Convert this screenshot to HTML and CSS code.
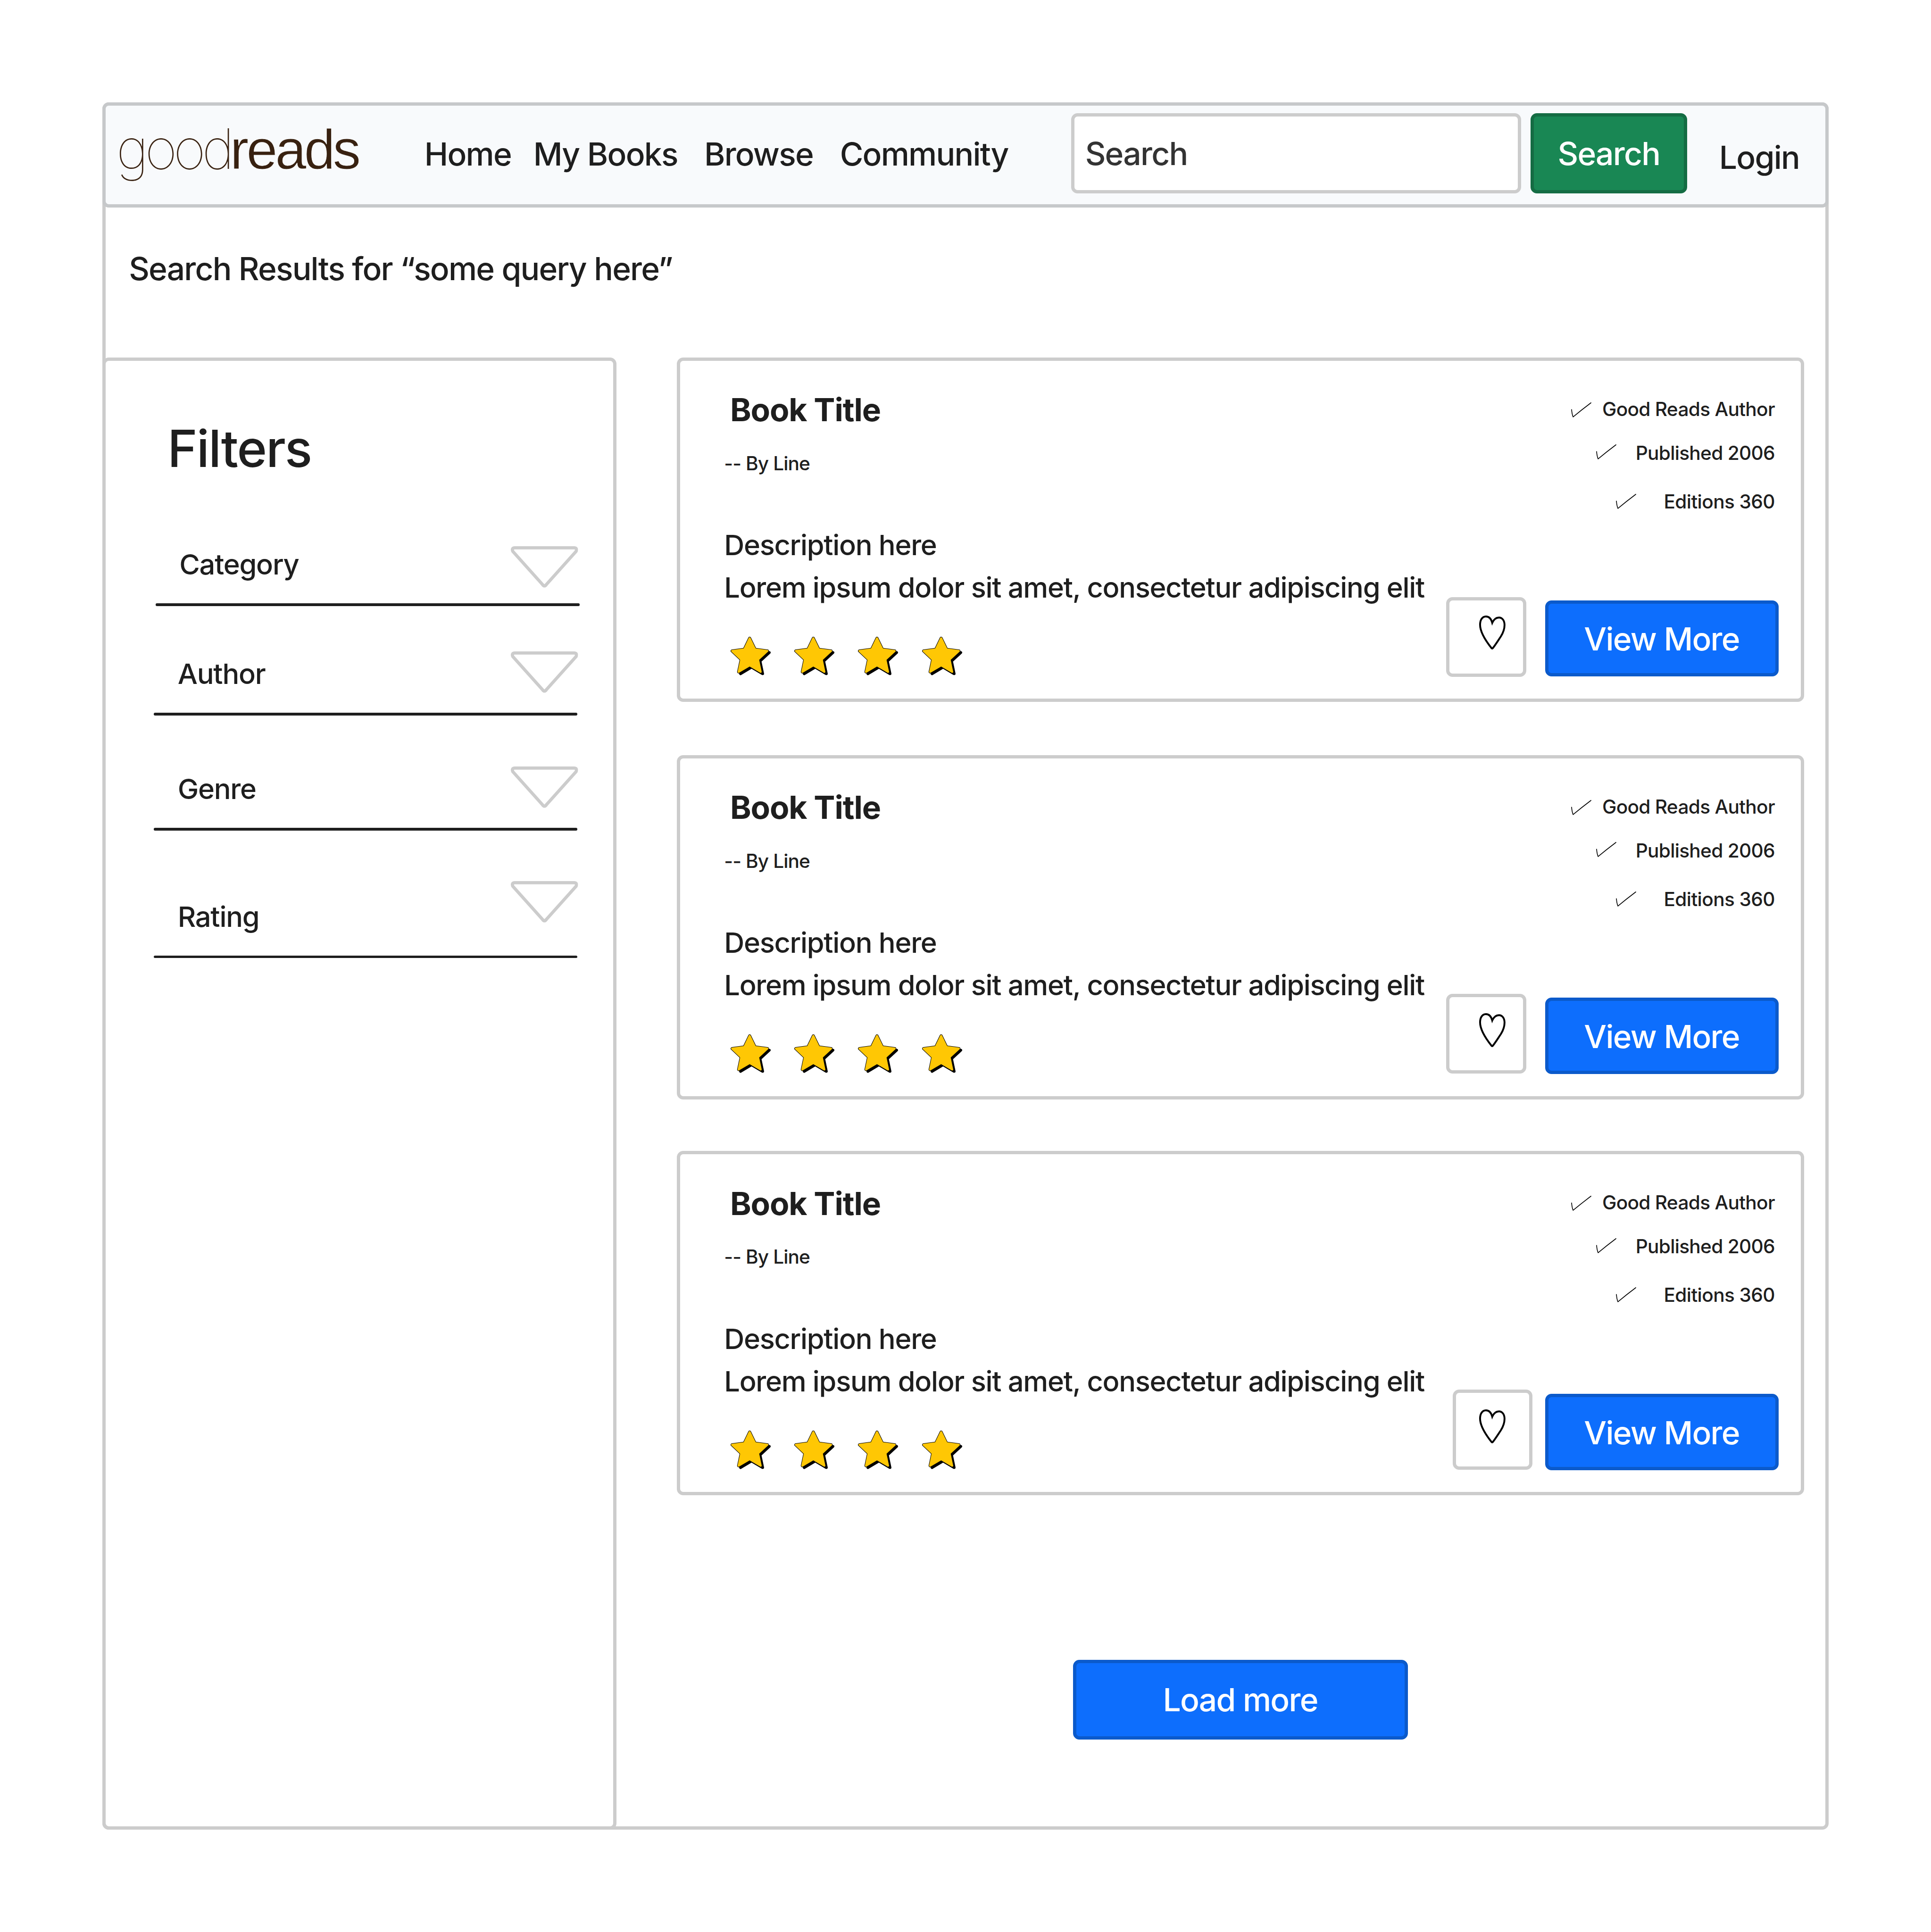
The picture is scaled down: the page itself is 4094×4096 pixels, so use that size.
FILE: index.html
```html
<!DOCTYPE html>
<html lang="en">
<head>
<meta charset="utf-8">
<title>goodreads – Search Results</title>
<link rel="stylesheet" href="styles.css">
</head>
<body>
<svg class="sprite" aria-hidden="true">
  <symbol id="star" viewBox="0 0 102 98">
    <g stroke-linejoin="round">
      <polygon points="55,45 97,39.500 73.700,61 80.300,92.600 52.500,76.200 24.800,92.600 40,60" fill="#000" stroke="#000" stroke-width="7"/>
      <polygon points="47.700,3.700 61.200,31.500 92.200,35.500 68.900,57 75.400,88 47.700,71.700 20,88 26.500,57 3.700,35.500 34.300,31.500" fill="#000" stroke="#000" stroke-width="7.400"/>
      <polygon points="47.700,3.700 61.200,31.500 92.200,35.500 68.900,57 75.400,88 47.700,71.700 20,88 26.500,57 3.700,35.500 34.300,31.500" fill="#ffc704" stroke="#ffc704" stroke-width="5"/>
    </g>
  </symbol>
  <symbol id="check" viewBox="0 0 51 38">
    <path d="M1.2 18 Q2.2 30 5 36.6 Q26 19 49.7 1.2" fill="none" stroke="#000" stroke-width="2" stroke-linecap="round" stroke-linejoin="round"/>
  </symbol>
  <symbol id="heart" viewBox="318 187 199 255">
    <path d="M416.500 242C408 210 390 194 369 194C340 194 325 222 325 256C325 306 362 370 411 432Q416 437 421 432C440 408 460 376 482 343C500 314 509 291 509 258C509 225 492 202 467 202C444 202 428 216 416.500 242Z" fill="none" stroke="#000" stroke-width="14"/>
  </symbol>
  <symbol id="triangle" viewBox="0 0 168.500 104">
    <path d="M10 4H158.500Q167 4 163.500 13L89 96Q84.250 103 79.500 96L5 13Q1.500 4 10 4Z" fill="#fff" stroke="#ccc" stroke-width="8"/>
  </symbol>
</svg>
<div class="frame">
  <header class="topbar">
    <div class="logo"><span class="logo-good">good</span><span class="logo-reads">reads</span></div>
    <nav class="nav"><a>Home</a><a>My Books</a><a>Browse</a><a>Community</a></nav>
    <div class="field">Search</div>
    <div class="button button-green">Search</div>
    <a class="login">Login</a>
  </header>
  <h1 class="query">Search Results for “some query here”</h1>
  <main class="main">
    <aside class="sidebar">
      <h2 class="filters-title">Filters</h2>
      <div class="filter category"><div class="filter-head"><span>Category</span><svg class="triangle"><use href="#triangle"/></svg></div><div class="rule"></div></div>
      <div class="filter author"><div class="filter-head"><span>Author</span><svg class="triangle"><use href="#triangle"/></svg></div><div class="rule"></div></div>
      <div class="filter genre"><div class="filter-head"><span>Genre</span><svg class="triangle"><use href="#triangle"/></svg></div><div class="rule"></div></div>
      <div class="filter rating"><div class="filter-head"><span>Rating</span><svg class="triangle"><use href="#triangle"/></svg></div><div class="rule"></div></div>
    </aside>
    <section class="results">
      <article class="card first">
        <div class="info">
          <h3 class="title">Book Title</h3>
          <p class="byline">-- By Line</p>
          <p class="description">Description here<br>Lorem ipsum dolor sit amet, consectetur adipiscing elit</p>
          <div class="stars"><svg><use href="#star"/></svg><svg><use href="#star"/></svg><svg><use href="#star"/></svg><svg><use href="#star"/></svg></div>
        </div>
        <div class="side">
          <div class="fact fact-author"><svg class="check"><use href="#check"/></svg><span>Good Reads Author</span></div>
          <div class="fact fact-published"><svg class="check"><use href="#check"/></svg><span>Published 2006</span></div>
          <div class="fact fact-editions"><svg class="check"><use href="#check"/></svg><span>Editions 360</span></div>
          <div class="actions"><div class="like"><svg class="heart"><use href="#heart"/></svg></div><div class="button view">View More</div></div>
        </div>
      </article>
      <article class="card second">
        <div class="info">
          <h3 class="title">Book Title</h3>
          <p class="byline">-- By Line</p>
          <p class="description">Description here<br>Lorem ipsum dolor sit amet, consectetur adipiscing elit</p>
          <div class="stars"><svg><use href="#star"/></svg><svg><use href="#star"/></svg><svg><use href="#star"/></svg><svg><use href="#star"/></svg></div>
        </div>
        <div class="side">
          <div class="fact fact-author"><svg class="check"><use href="#check"/></svg><span>Good Reads Author</span></div>
          <div class="fact fact-published"><svg class="check"><use href="#check"/></svg><span>Published 2006</span></div>
          <div class="fact fact-editions"><svg class="check"><use href="#check"/></svg><span>Editions 360</span></div>
          <div class="actions"><div class="like"><svg class="heart"><use href="#heart"/></svg></div><div class="button view">View More</div></div>
        </div>
      </article>
      <article class="card third">
        <div class="info">
          <h3 class="title">Book Title</h3>
          <p class="byline">-- By Line</p>
          <p class="description">Description here<br>Lorem ipsum dolor sit amet, consectetur adipiscing elit</p>
          <div class="stars"><svg><use href="#star"/></svg><svg><use href="#star"/></svg><svg><use href="#star"/></svg><svg><use href="#star"/></svg></div>
        </div>
        <div class="side">
          <div class="fact fact-author"><svg class="check"><use href="#check"/></svg><span>Good Reads Author</span></div>
          <div class="fact fact-published"><svg class="check"><use href="#check"/></svg><span>Published 2006</span></div>
          <div class="fact fact-editions"><svg class="check"><use href="#check"/></svg><span>Editions 360</span></div>
          <div class="actions"><div class="like"><svg class="heart"><use href="#heart"/></svg></div><div class="button view">View More</div></div>
        </div>
      </article>
      <div class="button load">Load more</div>
    </section>
  </main>
</div>
</body>
</html>
```
FILE: styles.css
```css
/* All lengths are in rem; the root size scales the whole layout. */
html { font-size: 84.622px; }

*, *::before, *::after { box-sizing: border-box; }

body {
  margin: 0;
  background: #fff;
  color: #1e1e1e;
  font-family: Inter, "Liberation Sans", sans-serif;
  font-size: .8rem;
  font-weight: 500;
  letter-spacing: -.0255em;
  overflow: hidden;
}

h1, h2, h3, p { margin: 0; font-weight: 500; }
svg { display: block; flex: none; overflow: visible; }
.sprite { display: none; }

.frame {
  width: 43.26rem;
  height: 43.28rem;
  margin: 2.56rem 0 0 2.56rem;
  border: .083rem solid #ccc;
  border-radius: .16rem;
}

/* Header */
.topbar {
  display: flex;
  align-items: flex-start;
  height: 2.64rem;
  margin: -.083rem -.083rem 0;
  padding-top: .197rem;
  border: .083rem solid #c6c8ca;
  border-radius: .16rem;
  background: #f8fafc;
  line-height: 2rem;
  white-space: nowrap;
}
.logo {
  width: 7.99rem;
  margin-top: -.105rem;
  padding-left: .27rem;
  color: #382110;
  font-size: 1.395rem;
}
.logo-good { font-weight: 100; letter-spacing: -.093rem; }
.logo-reads {
  margin-left: -.014rem;
  font-family: "Liberation Sans", Arial, sans-serif;
  font-size: 1.4rem;
  font-weight: 400;
  letter-spacing: -.056rem;
  -webkit-text-stroke: .011rem #f8fafc;
}
.nav {
  display: grid;
  grid-template-columns: 2.73rem 4.28rem 3.4rem 5.8rem;
  width: 16.2rem;
  padding-top: .018rem;
}
.field {
  width: 11.28rem;
  height: 2rem;
  padding: .007rem .272rem 0;
  border: .083rem solid #ccc;
  border-radius: .16rem;
  background: #fff;
  color: #333;
  line-height: 1.84rem;
}
.button {
  border: .083rem solid #0b5acb;
  border-radius: .16rem;
  background: #0d6efd;
  color: #fff;
  text-align: center;
  white-space: nowrap;
}
.button-green {
  width: 3.92rem;
  height: 2rem;
  margin-left: .24rem;
  padding: .005rem .01rem 0 0;
  border-color: #146c43;
  background: #198754;
  line-height: 1.84rem;
}
.login { margin-left: .8rem; padding-top: .099rem; }

.query {
  height: 3.757rem;
  padding: .529rem 0 0 .585rem;
  font-size: .8rem;
  line-height: 2rem;
  letter-spacing: -.0265em;
}

.main {
  display: grid;
  grid-template-columns: 12.88rem 28.24rem;
  column-gap: 1.52rem;
  height: 36.88rem;
  margin-left: -.083rem;
}

/* Filters */
.sidebar {
  padding: 1.394rem 0 0 1.207rem;
  border: .083rem solid #ccc;
  border-radius: .16rem;
}
.filters-title {
  padding-left: .347rem;
  font-size: 1.28rem;
  line-height: 1.6rem;
  letter-spacing: -.0195em;
}
.filter {
  display: flex;
  flex-direction: column;
  width: 10.62rem;
  font-size: .704rem;
  line-height: 1rem;
  letter-spacing: -.0205em;
}
.filter-head {
  display: flex;
  flex: 1;
  align-items: flex-start;
  justify-content: space-between;
  padding-left: .602rem;
  margin-right: -.015rem;
}
.rule { height: .064rem; border-radius: .032rem; background: #1e1e1e; }
.triangle { width: 1.685rem; height: 1.04rem; }
.category { height: 3.15rem; margin-left: .051rem; }
.category .filter-head { padding: 1.6rem 0 0 .592rem; margin-right: .035rem; }
.category .triangle { margin-top: .05rem; }
.author { height: 2.742rem; }
.author .filter-head { padding-top: 1.136rem; }
.author span { margin-top: .064rem; }
.genre { height: 2.881rem; }
.genre .filter-head { padding-top: 1.274rem; }
.genre span { margin-top: .064rem; }
.rating { height: 3.2rem; }
.rating .filter-head { padding-top: 1.273rem; }
.rating span { margin-top: .384rem; }

/* Results */
.results { display: flex; flex-direction: column; }
.card {
  display: flex;
  justify-content: space-between;
  height: 8.625rem;
  padding: 0 .56rem 0 1.1rem;
  border: .083rem solid #ccc;
  border-radius: .16rem;
  background: #fff;
}
.second { margin-top: 1.335rem; }
.third { margin-top: 1.295rem; }

.info { padding-top: .749rem; white-space: nowrap; }
.title {
  padding-left: .15rem;
  font-size: .8rem;
  font-weight: 700;
  line-height: .96rem;
  letter-spacing: -.0167em;
}
.byline {
  margin-top: .571rem;
  font-size: .48rem;
  line-height: .58rem;
  letter-spacing: -.0218em;
}
.description {
  margin-top: 1.221rem;
  font-size: .704rem;
  line-height: 1.065rem;
  letter-spacing: -.0215em;
}
.stars { display: flex; gap: .58rem; margin-top: .709rem; padding-left: .158rem; }
.stars svg { width: 1.02rem; height: .98rem; }

.side { display: flex; flex-direction: column; align-items: flex-end; padding-top: .925rem; }
.fact {
  display: flex;
  align-items: flex-start;
  height: .58rem;
  margin-right: .09rem;
  font-size: .48rem;
  line-height: .58rem;
  letter-spacing: -.0175em;
  white-space: nowrap;
}
.check { width: .51rem; height: .38rem; margin: .115rem .27rem 0 0; }
.fact-published { margin-top: .515rem; }
.fact-published .check { margin: .077rem .484rem 0 0; }
.fact-editions { margin-top: .64rem; letter-spacing: -.015em; }
.fact-editions .check { margin: .093rem .69rem 0 0; }

.actions { display: flex; align-items: flex-start; margin-top: 2.1rem; }
.like {
  width: 2rem;
  height: 2rem;
  padding: .383rem 0 0 .74rem;
  border: .083rem solid #ccc;
  border-radius: .16rem;
}
.heart { width: .663rem; height: .85rem; }
.second .like, .third .like { margin-top: -.02rem; padding-top: .403rem; }
.third .like { margin-right: -.16rem; padding-left: .58rem; }
.view {
  width: 5.84rem;
  height: 1.91rem;
  margin: .08rem 0 0 .48rem;
  padding: .01rem .01rem 0 0;
  line-height: 1.75rem;
}
.load {
  align-self: center;
  width: 8.4rem;
  height: 2rem;
  margin-top: 4.12rem;
  padding: .005rem .01rem 0 0;
  line-height: 1.84rem;
}
```
